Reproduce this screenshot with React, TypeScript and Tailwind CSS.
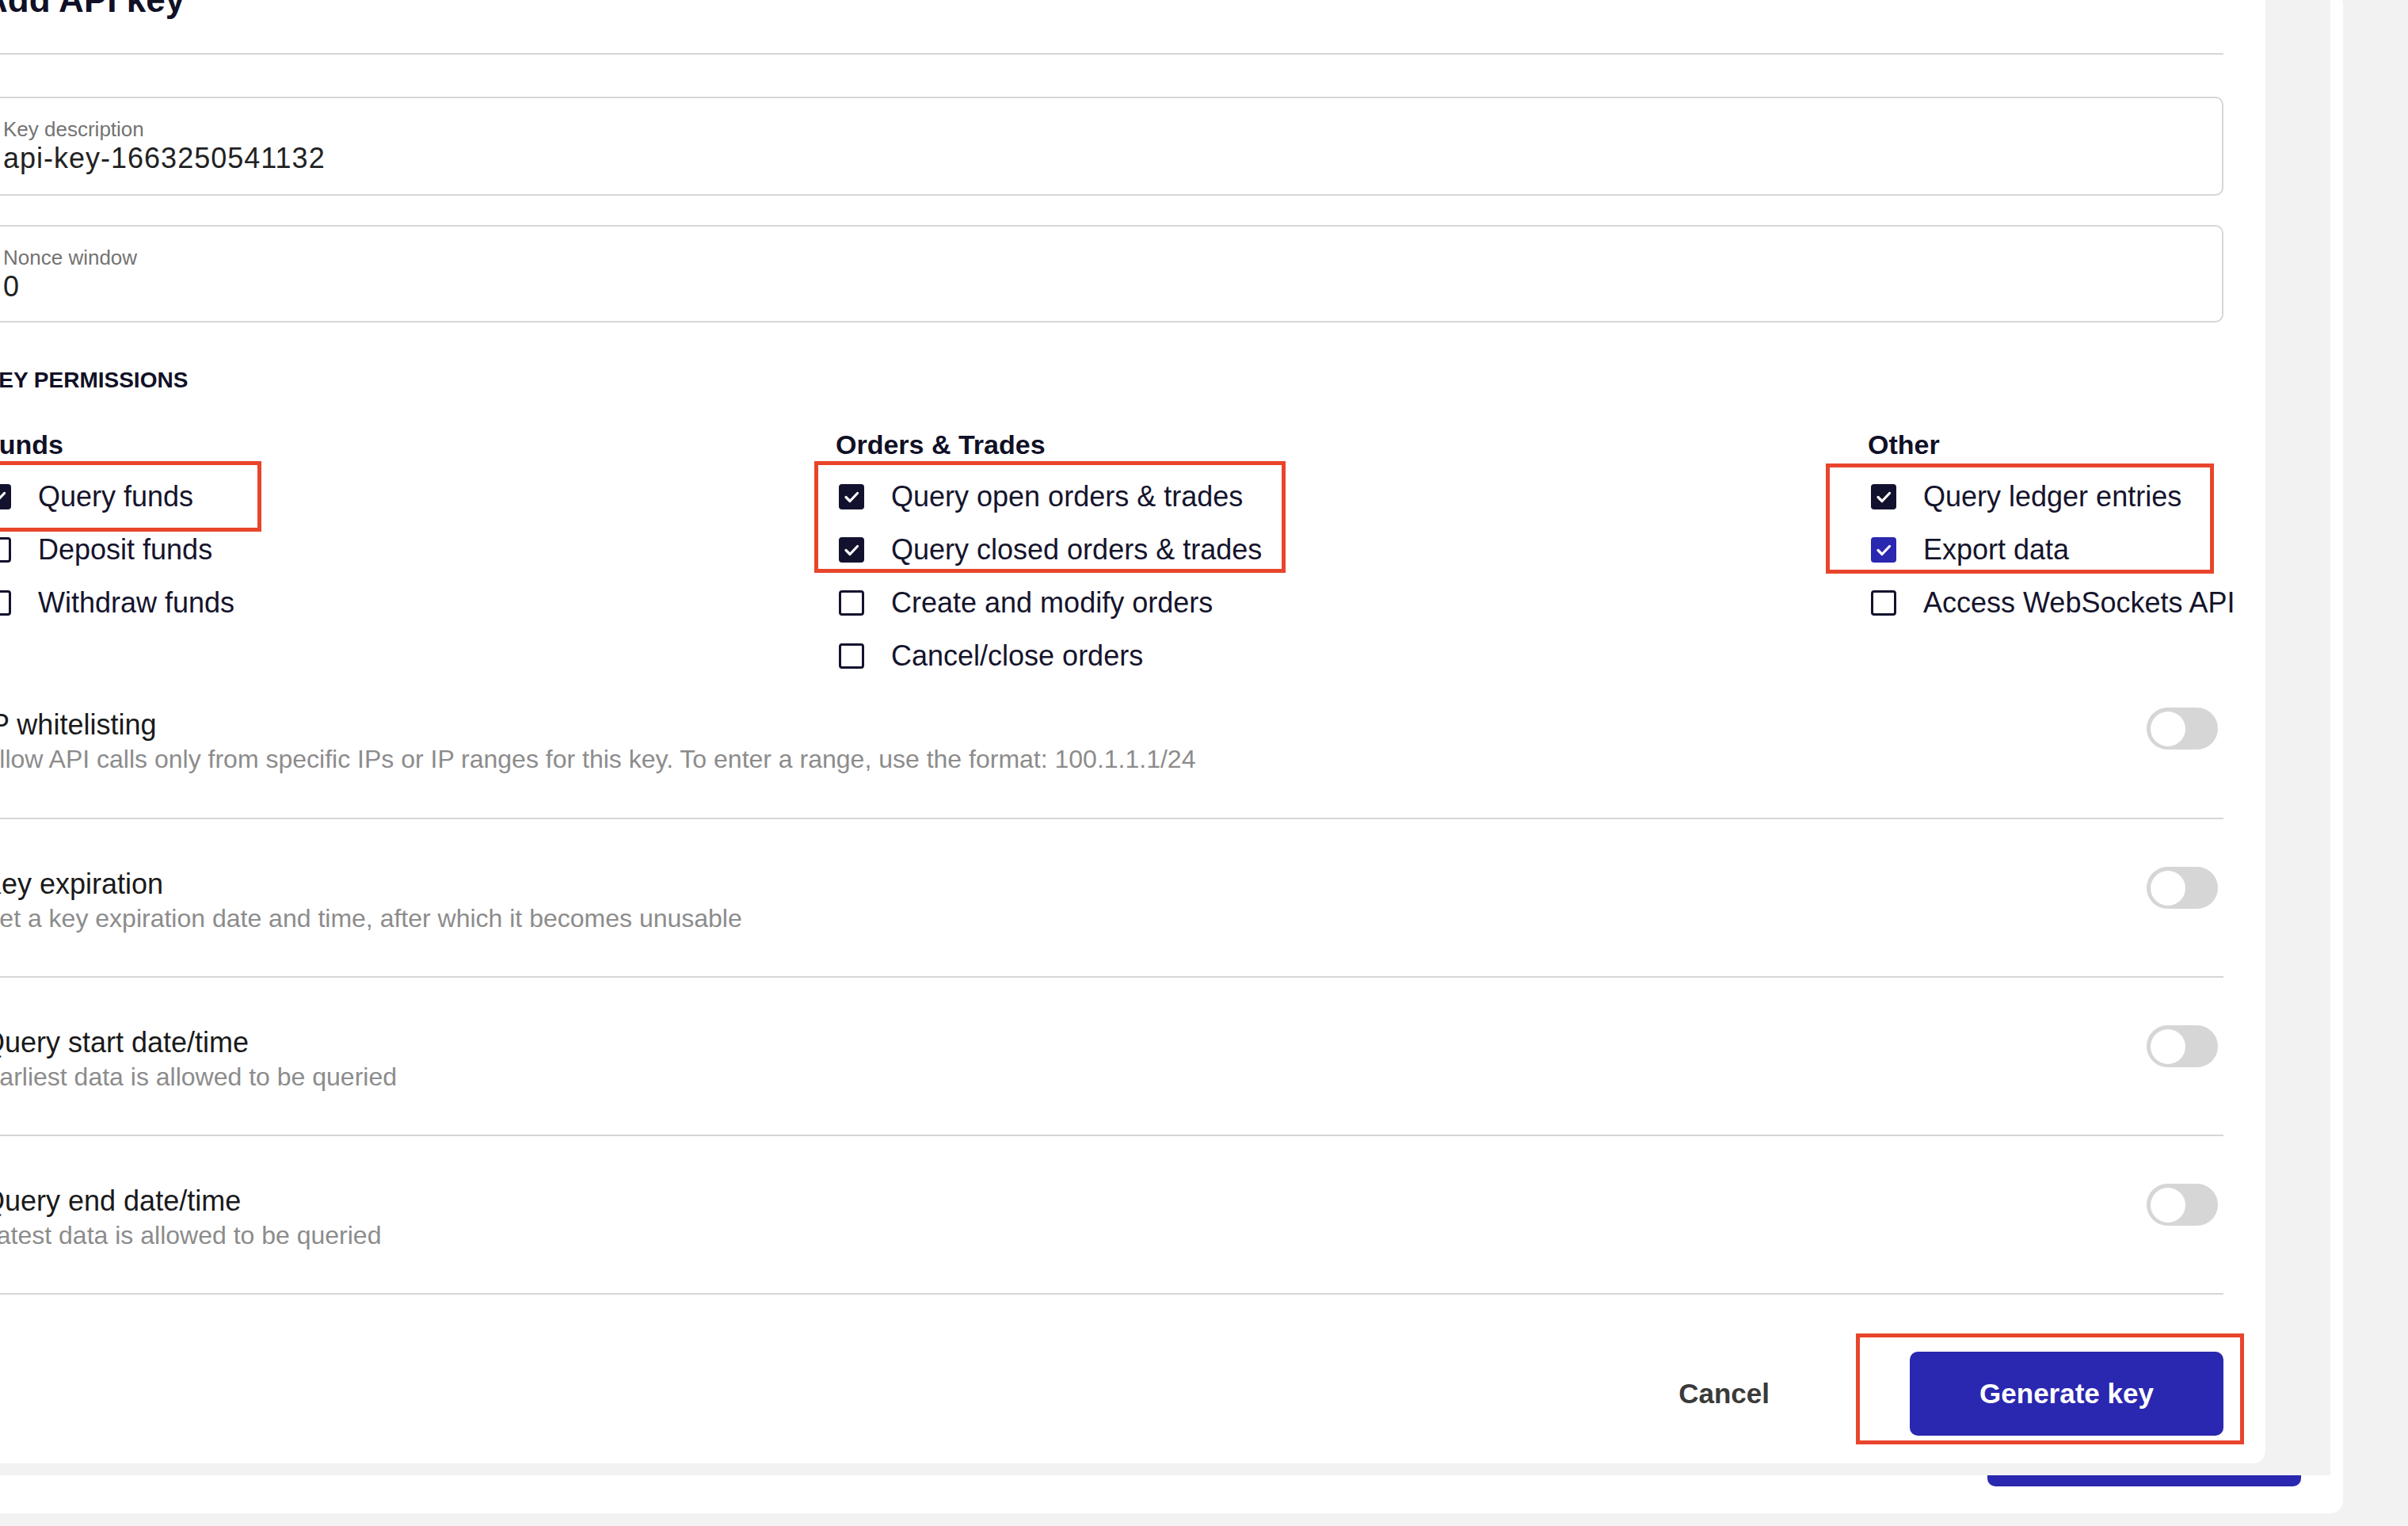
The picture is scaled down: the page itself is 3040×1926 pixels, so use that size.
import clsx from "clsx";

type Perm = { label: string; checked?: boolean; accent?: boolean };

const Checkbox = ({ checked, accent }: { checked?: boolean; accent?: boolean }) => (
  <span
    className={clsx(
      "ml-[4px] flex h-[32px] w-[32px] shrink-0 items-center justify-center rounded-[4px]",
      checked ? (accent ? "bg-[#2a27b0]" : "bg-[#13122e]") : "border-[3px] border-[#13122e]",
    )}
  >
    {checked && (
      <svg viewBox="0 0 32 32" className="h-[32px] w-[32px]">
        <path
          d="M9 16.5l5 5 9.5-10"
          fill="none"
          stroke="white"
          strokeWidth="3.2"
          strokeLinecap="round"
          strokeLinejoin="round"
        />
      </svg>
    )}
  </span>
);

const PermRow = ({ perm }: { perm: Perm }) => (
  <div className="flex h-[32px] items-center gap-[34px]">
    <Checkbox checked={perm.checked} accent={perm.accent} />
    <span className="whitespace-nowrap text-[36px] leading-[32px] text-[#15142c]">{perm.label}</span>
  </div>
);

const PermColumn = ({
  title,
  marked,
  rest,
  boxClass,
}: {
  title: string;
  marked: Perm[];
  rest: Perm[];
  boxClass: string;
}) => (
  <div>
    <h3 className="text-[34px] font-bold leading-[40px] text-[#101026]">{title}</h3>
    <div className="mt-[30px] flex flex-col gap-[35px]">
      <div className="relative flex flex-col gap-[35px]">
        <span className={clsx("pointer-events-none absolute border-[5px] border-[#e8452c]", boxClass)} />
        {marked.map((p) => (
          <PermRow key={p.label} perm={p} />
        ))}
      </div>
      {rest.map((p) => (
        <PermRow key={p.label} perm={p} />
      ))}
    </div>
  </div>
);

const Toggle = () => (
  <div className="mr-[7px] flex h-[53px] w-[90px] shrink-0 items-center rounded-full bg-[#d6d6d6] pl-[5px]">
    <span className="h-[44px] w-[44px] rounded-full bg-white" />
  </div>
);

const ToggleRow = ({ title, desc, first }: { title: string; desc: string; first?: boolean }) => (
  <div
    className={clsx(
      "flex items-start justify-between border-b-2 border-[#d6d6d6]",
      first ? "h-[190px] pt-[49px]" : "h-[200px] pt-[60px]",
    )}
  >
    <div>
      <div className="whitespace-nowrap text-[36px] font-medium leading-[44px] text-[#1a1a1a]">{title}</div>
      <div className="mt-[2px] whitespace-nowrap text-[32px] leading-[38px] text-[#8c8c8c]">{desc}</div>
    </div>
    <Toggle />
  </div>
);

const Field = ({ label, value, tall }: { label: string; value: string; tall?: boolean }) => (
  <div
    className={clsx(
      "rounded-[10px] border-2 border-[#d6d6d6] px-[24px] pt-[23px]",
      tall ? "h-[125px]" : "h-[123px]",
    )}
  >
    <div className="text-[26px] leading-[32px] text-[#737373]">{label}</div>
    <div className="-mt-[1px] text-[36px] leading-[44px] tracking-[1px] text-[#222222]">{value}</div>
  </div>
);

export default function App() {
  return (
    <div className="relative h-[1926px] w-[3040px] overflow-hidden bg-[#f2f2f2] font-['Liberation_Sans',Arial,sans-serif]">
      {/* page card under the dialog */}
      <div className="-mt-[10px] ml-[-100px] flex h-[1920px] w-[3058px] flex-col items-end justify-end rounded-2xl bg-white pb-[34px] pr-[53px]">
        <div className="h-[100px] w-[396px] rounded-[10px] bg-[#2a27b0]" />
      </div>

      {/* backdrop */}
      <div className="absolute left-0 top-0 flex h-[1862px] w-[2942px] items-start justify-end bg-[#f2f2f2] pr-[82px]">
        <div className="-mt-[80px] w-[2935px] shrink-0 rounded-2xl bg-white px-[53px] pb-[35px] pt-[54px]">
          <h2 className="whitespace-nowrap text-[44px] font-bold leading-[52px] text-[#101026]">Add API key</h2>
          <div className="mt-[41px] h-[2px] bg-[#d6d6d6]" />

          <div className="mt-[53px]">
            <Field label="Key description" value="api-key-1663250541132" tall />
          </div>
          <div className="mt-[37px]">
            <Field label="Nonce window" value="0" />
          </div>

          <div className="mt-[55px] text-[28px] font-bold uppercase leading-[36px] text-[#101026]">Key permissions</div>

          <div className="mt-[43px] grid grid-cols-[1077px_1303px_1fr]">
            <PermColumn
              title="Funds"
              marked={[{ label: "Query funds", checked: true }]}
              rest={[{ label: "Deposit funds" }, { label: "Withdraw funds" }]}
              boxClass="left-[-40px] top-[-29px] h-[89px] w-[392px]"
            />
            <PermColumn
              title="Orders & Trades"
              marked={[
                { label: "Query open orders & trades", checked: true },
                { label: "Query closed orders & trades", checked: true },
              ]}
              rest={[{ label: "Create and modify orders" }, { label: "Cancel/close orders" }]}
              boxClass="left-[-27px] top-[-29px] h-[141px] w-[595px]"
            />
            <PermColumn
              title="Other"
              marked={[
                { label: "Query ledger entries", checked: true },
                { label: "Export data", checked: true, accent: true },
              ]}
              rest={[{ label: "Access WebSockets API" }]}
              boxClass="left-[-53px] top-[-26px] h-[139px] w-[490px]"
            />
          </div>

          <ToggleRow
            first
            title="IP whitelisting"
            desc="Allow API calls only from specific IPs or IP ranges for this key. To enter a range, use the format: 100.1.1.1/24"
          />
          <ToggleRow title="Key expiration" desc="Set a key expiration date and time, after which it becomes unusable" />
          <ToggleRow title="Query start date/time" desc="Earliest data is allowed to be queried" />
          <ToggleRow title="Query end date/time" desc="Latest data is allowed to be queried" />

          <div className="mt-[72px] flex items-center justify-end gap-[177px]">
            <button className="text-[35px] font-bold text-[#3a3a3a]">Cancel</button>
            <div className="relative">
              <span className="pointer-events-none absolute left-[-68px] top-[-23px] h-[140px] w-[490px] border-[5px] border-[#e8452c]" />
              <button className="h-[106px] w-[396px] rounded-[10px] bg-[#2a27b0] text-[35px] font-bold text-white">
                Generate key
              </button>
            </div>
          </div>
        </div>
      </div>
    </div>
  );
}
